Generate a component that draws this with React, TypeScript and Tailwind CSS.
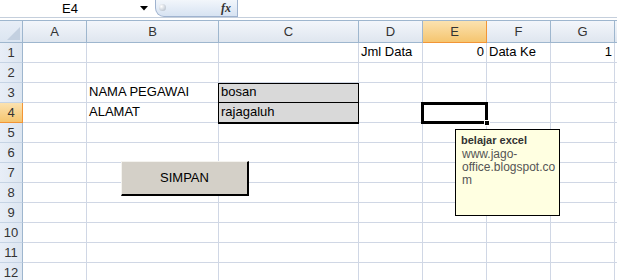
import {FC} from 'react'

const cols = [
  {name: 'A', w: 'w-[64px]'},
  {name: 'B', w: 'w-[132px]'},
  {name: 'C', w: 'w-[140px]'},
  {name: 'D', w: 'w-[64px]'},
  {name: 'E', w: 'w-[64px]'},
  {name: 'F', w: 'w-[64px]'},
  {name: 'G', w: 'w-[64px]'},
  {name: 'H', w: 'w-[64px]'}
]

type Cell = {text: string; right?: boolean; filled?: boolean}
const data: Record<number, Record<string, Cell>> = {
  1: {
    D: {text: 'Jml Data'},
    E: {text: '0', right: true},
    F: {text: 'Data Ke'},
    G: {text: '1', right: true}
  },
  3: {B: {text: 'NAMA PEGAWAI'}, C: {text: 'bosan', filled: true}},
  4: {B: {text: 'ALAMAT'}, C: {text: 'rajagaluh', filled: true}}
}

const rows = Array.from({length: 12}, (_, i) => i + 1)

const FormulaBar: FC = () => (
  <div className="flex h-[18px] border-b border-[#c5cfdc] bg-white">
    <div className="w-[140px] shrink-0 flex items-center justify-center text-[13px] text-black">E4</div>
    <div className="w-[15px] shrink-0 flex items-center">
      <svg width="8" height="5" viewBox="0 0 8 5">
        <path d="M0 0h8L4 4.5z" fill="#000" />
      </svg>
    </div>
    <div className="relative w-[83px] shrink-0 h-[17px] rounded-bl-[9px] border border-t-0 border-[#9fb3cf] bg-[linear-gradient(#f2f6fb,#d7e3f2)] flex items-center justify-end pr-[6px]">
      <span className="absolute left-[3px] top-[4px] w-[7px] h-[7px] rounded-full bg-[radial-gradient(circle_at_35%_35%,#ffffff,#a9b4c2)]" />
      <span className="font-['Liberation_Serif'] italic text-[12px] font-bold text-[#333]">fx</span>
    </div>
  </div>
)

const HeaderRow: FC = () => (
  <div className="flex h-[23px] border-t border-[#9eb6ce]">
    <div className="relative w-[23px] shrink-0 border-r border-b border-[#9eb6ce] bg-[linear-gradient(#e8eef7,#dbe5f1)]">
      <svg className="absolute right-[2px] bottom-[2px]" width="13" height="13" viewBox="0 0 13 13">
        <path d="M13 0V13H0z" fill="#c3d0e0" />
      </svg>
    </div>
    {cols.map((c) => (
      <div
        key={c.name}
        className={`${c.w} shrink-0 flex items-center justify-center border-r border-b text-[13px] ${
          c.name === 'E'
            ? 'bg-[linear-gradient(#fbe2b0,#f5c56f)] border-[#f29536] text-[#333]'
            : 'bg-[linear-gradient(#f3f6fb,#dfe6ef)] border-[#9eb6ce] text-[#333]'
        }`}
      >
        {c.name === 'H' ? '' : c.name}
      </div>
    ))}
  </div>
)

const GridRow: FC<{n: number}> = ({n}) => (
  <div className="flex h-[20px]">
    <div
      className={`w-[23px] shrink-0 flex items-center justify-center border-r border-b text-[13px] text-[#333] ${
        n === 4
          ? 'bg-[linear-gradient(#fbe2b0,#f5c56f)] border-[#f29536]'
          : 'bg-[linear-gradient(90deg,#e8eef7,#dde6f1)] border-[#9eb6ce] border-b-[#c5d3e4]'
      }`}
    >
      {n}
    </div>
    {cols.map((c) => {
      const cell = data[n]?.[c.name]
      return (
        <div
          key={c.name}
          className={`${c.w} shrink-0 flex items-end pb-[1px] px-[2px] border-r border-b text-[13px] text-black whitespace-nowrap ${
            cell?.right ? 'justify-end' : ''
          } ${cell?.filled ? 'bg-[#d9d9d9] border-black' : 'border-[#d0d7e5]'}`}
        >
          {cell?.text}
        </div>
      )
    })}
  </div>
)

export default function App() {
  return (
    <div className="relative w-[617px] h-[280px] overflow-hidden bg-white font-['Liberation_Sans',sans-serif]">
      <FormulaBar />
      <div className="h-[2px] bg-white" />
      <HeaderRow />
      {rows.map((n) => (
        <GridRow key={n} n={n} />
      ))}

      {/* black outline round C3:C4 */}
      <div className="absolute left-[218px] top-[83px] w-[141px] h-[41px] border border-black pointer-events-none" />

      {/* active cell E4 */}
      <div className="absolute left-[421px] top-[102px] w-[67px] h-[22px] border-[3px] border-black" />
      <div className="absolute left-[484px] top-[120px] w-[6px] h-[6px] bg-black border border-white" />

      {/* SIMPAN button */}
      <button className="absolute left-[121px] top-[161px] w-[128px] h-[35px] bg-[#d4d0c8] border-t border-l border-t-[#f4f3ef] border-l-[#f4f3ef] border-r-2 border-b-2 border-r-black border-b-black text-[13px] text-black">
        SIMPAN
      </button>

      {/* comment */}
      <div className="absolute left-[455px] top-[129px] w-[105px] h-[87px] bg-[#ffffe1] border border-black px-[5px] pt-[4px] leading-[13px] whitespace-nowrap">
        <div className="font-bold text-[11px] text-[#333] mb-[1px]">belajar excel</div>
        <div className="text-[12px] text-[#555] pl-[1px]">
          <div>www.jago-</div>
          <div>office.blogspot.co</div>
          <div>m</div>
        </div>
      </div>
    </div>
  )
}
